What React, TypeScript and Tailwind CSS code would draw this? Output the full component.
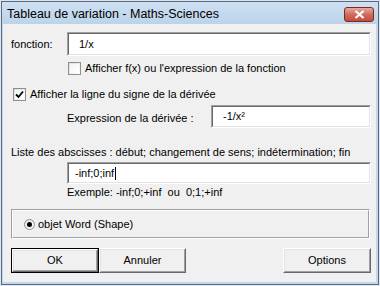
import React from "react";

const font = { fontFamily: '"Liberation Sans", Arial, sans-serif' };

function TextBox({ value, caret, className }: { value: string; caret?: boolean; className: string }) {
  return (
    <div
      className={`flex items-center border border-t-[#a0a0a0] border-l-[#a0a0a0] border-r-white border-b-white ${className}`}
    >
      <div className="flex h-full w-full items-center border border-t-[#696969] border-l-[#696969] border-r-[#e3e3e3] border-b-[#e3e3e3] bg-white pl-[10px] text-[11px] text-black">
        <span>{value}</span>
        {caret && <span className="ml-px inline-block h-[13px] w-px bg-black" />}
      </div>
    </div>
  );
}

function CheckBox({ checked }: { checked?: boolean }) {
  return (
    <div className="flex h-[13px] w-[13px] shrink-0 items-center justify-center border border-[#8e8f8f] bg-gradient-to-br from-[#dcdcdc] to-white">
      <div className="flex h-[9px] w-[9px] items-center justify-center bg-gradient-to-br from-[#f4f4f4] to-white">
        {checked && (
          <svg width="9" height="9" viewBox="0 0 9 9">
            <path d="M1 4.5 L3.5 7 L8 1.5" fill="none" stroke="#000" strokeWidth="1.8" />
          </svg>
        )}
      </div>
    </div>
  );
}

function Button({ label, isDefault, className }: { label: string; isDefault?: boolean; className: string }) {
  return (
    <div className={`${isDefault ? "border border-black" : ""} ${className}`}>
      <div className="h-full w-full border border-t-white border-l-white border-r-[#696969] border-b-[#696969]">
        <div className="flex h-full w-full items-center justify-center border border-t-[#e3e3e3] border-l-[#e3e3e3] border-r-[#a0a0a0] border-b-[#a0a0a0] bg-[#f0f0f0] text-[11px] text-black">
          {label}
        </div>
      </div>
    </div>
  );
}

export default function App() {
  return (
    <div className="h-[286px] w-[380px] bg-[#dbe6f2] p-px" style={font}>
      <div className="flex h-full w-full flex-col border border-[#5b6b7e] bg-[#c3d7ee]">
        {/* Title bar */}
        <div className="flex h-[22px] shrink-0 items-center justify-between bg-gradient-to-b from-[#cfe0f2] to-[#bcd3ea] pl-[5px] pr-[4px]">
          <span className="pt-[2px] text-[12.5px] text-black">Tableau de variation - Maths-Sciences</span>
          <div className="mt-[3px] flex h-[15px] w-[30px] items-center justify-center rounded-[3px] border border-[#7c2a23] bg-gradient-to-b from-[#e6aaa2] via-[#cf6b5f] to-[#c44a3d]">
            <svg width="11" height="9" viewBox="0 0 11 9">
              <path d="M1.5 1 L9.5 8 M9.5 1 L1.5 8" stroke="#ffffff" strokeWidth="2.2" />
            </svg>
          </div>
        </div>

        {/* Content */}
        <div className="mb-[2px] ml-px mr-[2px] flex flex-1 flex-col bg-[#f0f0f0] pl-[8px] pr-[5px] text-[11px] text-black">
          <div className="mt-[8px] flex h-[24px] items-center">
            <span className="w-[56px]">fonction:</span>
            <TextBox value="1/x" className="h-[24px] flex-1" />
          </div>

          <div className="mt-[6px] flex h-[13px] items-center pl-[57px]">
            <CheckBox />
            <span className="ml-[4px]">Afficher f(x) ou l'expression de la fonction</span>
          </div>

          <div className="mt-[13px] flex h-[13px] items-center pl-[2px]">
            <CheckBox checked />
            <span className="ml-[4px]">Afficher la ligne du signe de la dérivée</span>
          </div>

          <div className="mt-[4px] flex h-[23px] items-center pl-[56px]">
            <span className="w-[144px] pt-[3px]">Expression de la dérivée :</span>
            <TextBox value="-1/x²" className="h-[23px] flex-1" />
          </div>

          <div className="mt-[17px] flex h-[14px] items-center">
            <span>Liste des abscisses : début; changement de sens; indétermination; fin</span>
          </div>

          <div className="mt-[3px] flex h-[22px] pl-[56px]">
            <TextBox value="-inf;0;inf" caret className="h-[22px] flex-1 [&>div]:pl-[6px]" />
          </div>

          <div className="mt-px flex h-[14px] items-center pl-[56px]">
            <span>Exemple: -inf;0;+inf&nbsp; ou&nbsp; 0;1;+inf</span>
          </div>

          <div className="mr-px mt-[10px] h-[30px] border border-t-[#a0a0a0] border-l-[#a0a0a0] border-r-white border-b-white">
            <div className="flex h-full w-full items-center border border-t-white border-l-white border-r-[#a0a0a0] border-b-[#a0a0a0] pl-[11px]">
              <div className="flex h-[11px] w-[11px] items-center justify-center rounded-full border border-[#8e8f8f] bg-gradient-to-br from-[#e2e2e2] to-white">
                <div className="h-[5px] w-[5px] rounded-full bg-black" />
              </div>
              <span className="ml-[3px]">objet Word (Shape)</span>
            </div>
          </div>

          <div className="mt-[9px] flex h-[25px] items-center">
            <Button label="OK" isDefault className="h-[25px] w-[88px]" />
            <Button label="Annuler" className="h-[25px] w-[87px]" />
            <div className="flex-1" />
            <Button label="Options" className="h-[25px] w-[88px]" />
          </div>
        </div>
      </div>
    </div>
  );
}
